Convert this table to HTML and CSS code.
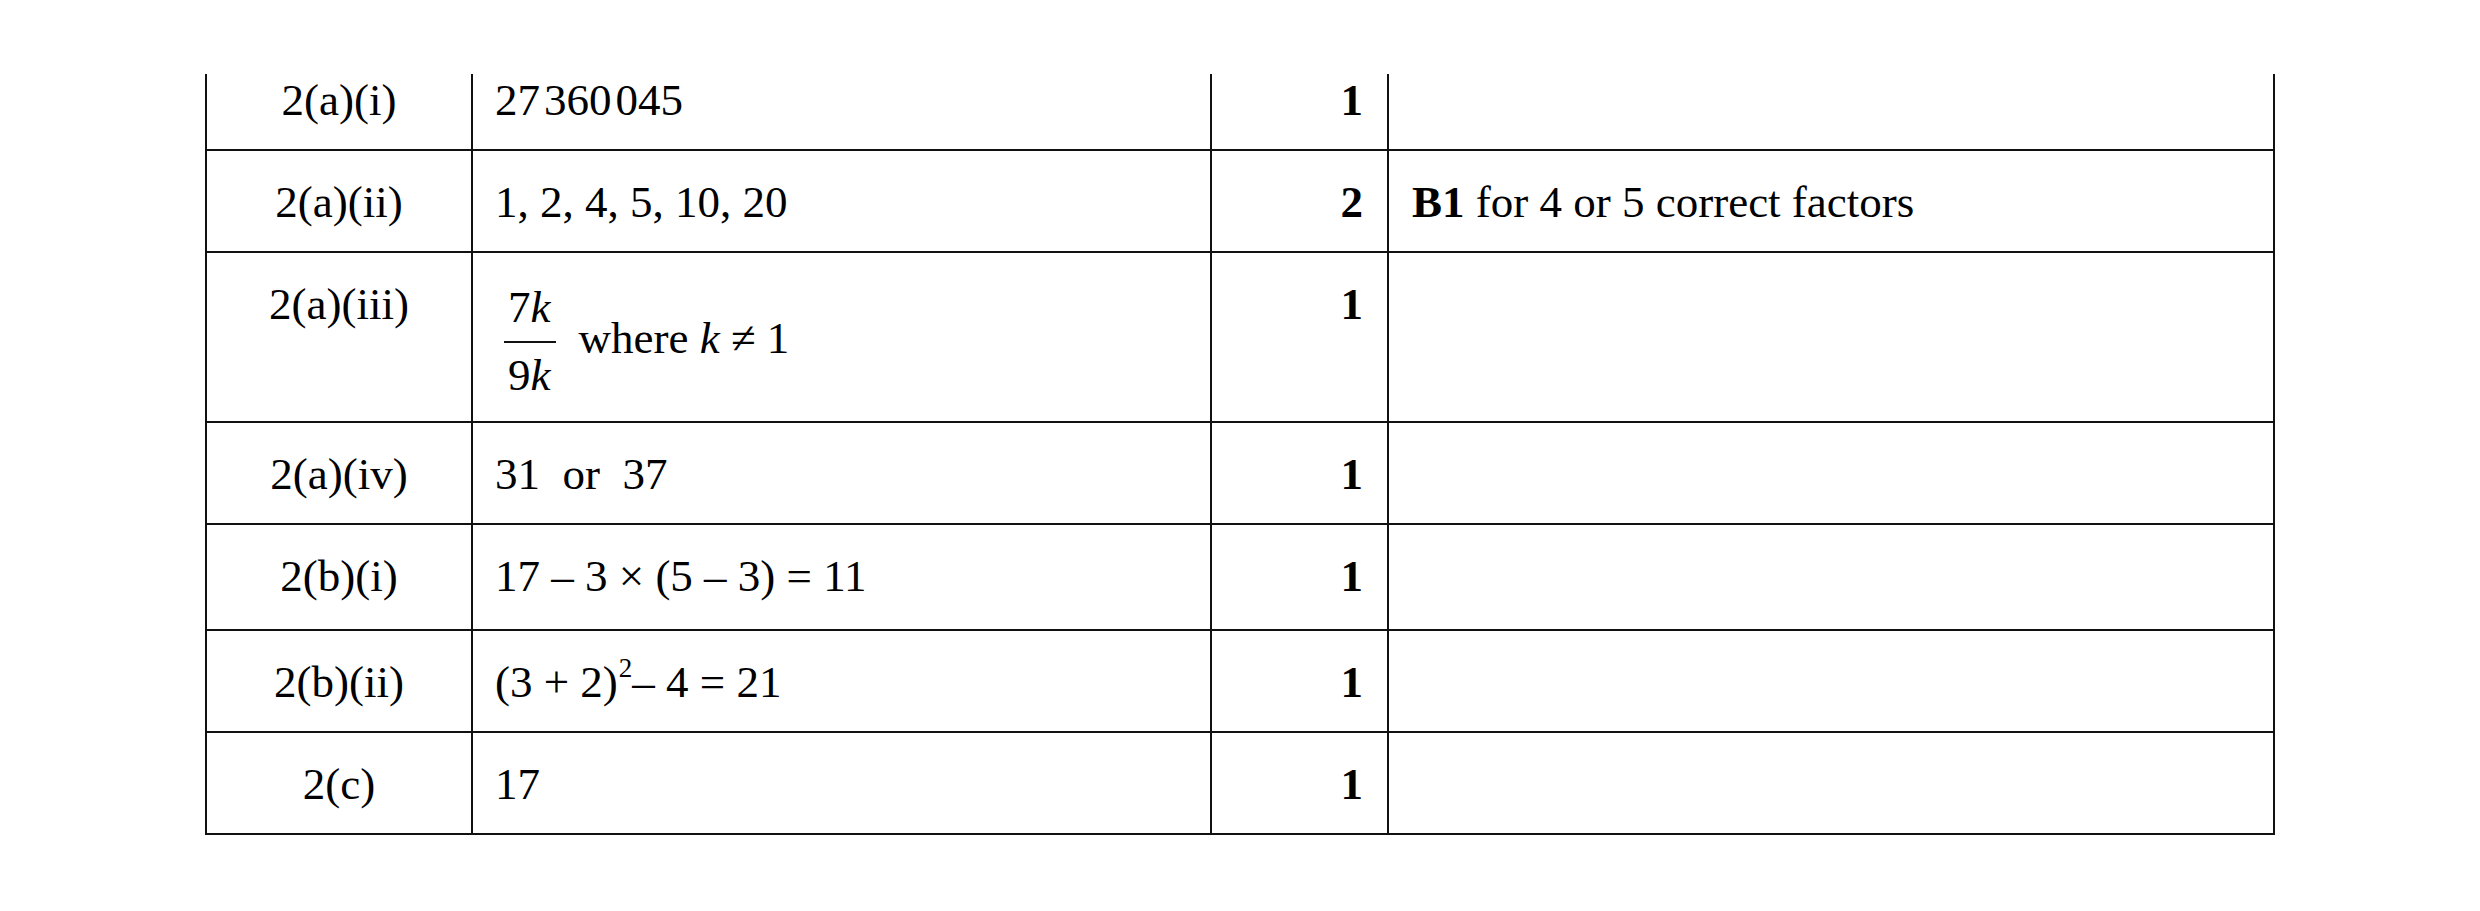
FILE: index.html
```html
<!DOCTYPE html>
<html lang="en">
<head>
<meta charset="utf-8">
<title>Mark scheme</title>
<link rel="stylesheet" href="styles.css">
</head>
<body>
<div class="page">
  <table class="scheme">
    <colgroup>
      <col class="c-q">
      <col class="c-ans">
      <col class="c-mark">
      <col class="c-note">
    </colgroup>
    <tbody>
      <tr class="first">
        <td class="q">2(a)(i)</td>
        <td class="ans">27<span class="ns">360</span><span class="ns">045</span></td>
        <td class="mark">1</td>
        <td class="note"></td>
      </tr>
      <tr>
        <td class="q">2(a)(ii)</td>
        <td class="ans">1, 2, 4, 5, 10, 20</td>
        <td class="mark">2</td>
        <td class="note"><b>B1</b> for 4 or 5 correct factors</td>
      </tr>
      <tr>
        <td class="q">2(a)(iii)</td>
        <td class="ans"><span class="frac"><span class="num">7<i>k</i></span><span class="den">9<i>k</i></span></span><span class="after">where <i>k</i> ≠ 1</span></td>
        <td class="mark">1</td>
        <td class="note"></td>
      </tr>
      <tr>
        <td class="q">2(a)(iv)</td>
        <td class="ans pre">31  or  37</td>
        <td class="mark">1</td>
        <td class="note"></td>
      </tr>
      <tr class="tall">
        <td class="q">2(b)(i)</td>
        <td class="ans">17 – 3 × (5 – 3) = 11</td>
        <td class="mark">1</td>
        <td class="note"></td>
      </tr>
      <tr>
        <td class="q">2(b)(ii)</td>
        <td class="ans">(3 + 2)<span class="sup">2</span>– 4 = 21</td>
        <td class="mark">1</td>
        <td class="note"></td>
      </tr>
      <tr>
        <td class="q">2(c)</td>
        <td class="ans">17</td>
        <td class="mark">1</td>
        <td class="note"></td>
      </tr>
    </tbody>
  </table>
</div>
</body>
</html>
```

FILE: styles.css
```css
html, body {
  margin: 0;
  padding: 0;
  background: #ffffff;
}

body {
  font-family: "Liberation Serif", "Times New Roman", serif;
  font-size: 45px;
  color: #000000;
}

.page {
  padding-top: 74px;
}

.scheme {
  width: 2068px;
  margin: 0 auto;
  border-collapse: collapse;
  table-layout: fixed;
}

.c-q { width: 266px; }
.c-ans { width: 739px; }
.c-mark { width: 177px; }
.c-note { width: 886px; }

.scheme td {
  border: 2px solid #111111;
  padding: 25px 24px 23px 22px;
  line-height: 52px;
  vertical-align: top;
  white-space: nowrap;
}

.scheme tr.first td {
  border-top: none;
  padding-top: 0;
}

.scheme tr.tall td {
  padding-bottom: 27px;
}

.scheme td.q {
  text-align: center;
  padding-left: 10px;
  padding-right: 10px;
}

.scheme td.mark {
  text-align: right;
  font-weight: bold;
  padding-right: 24px;
}

.scheme td.note {
  padding-left: 23px;
}

.scheme td.pre {
  white-space: pre;
}

.ns {
  margin-left: 4px;
}

.frac {
  display: inline-flex;
  flex-direction: column;
  align-items: stretch;
  vertical-align: 31px;
  margin-top: 7px;
  margin-bottom: 1px;
  margin-left: 9px;
}

.num {
  line-height: 44px;
  padding: 0 6px 12px 4px;
  border-bottom: 2px solid #111;
  text-align: center;
}

.den {
  line-height: 44px;
  padding-top: 10px;
  text-align: center;
  padding-right: 2px;
}

.after {
  margin-left: 22px;
}

.sup {
  font-size: 27px;
  vertical-align: 20px;
  line-height: 0;
  margin-left: 1px;
}
```
